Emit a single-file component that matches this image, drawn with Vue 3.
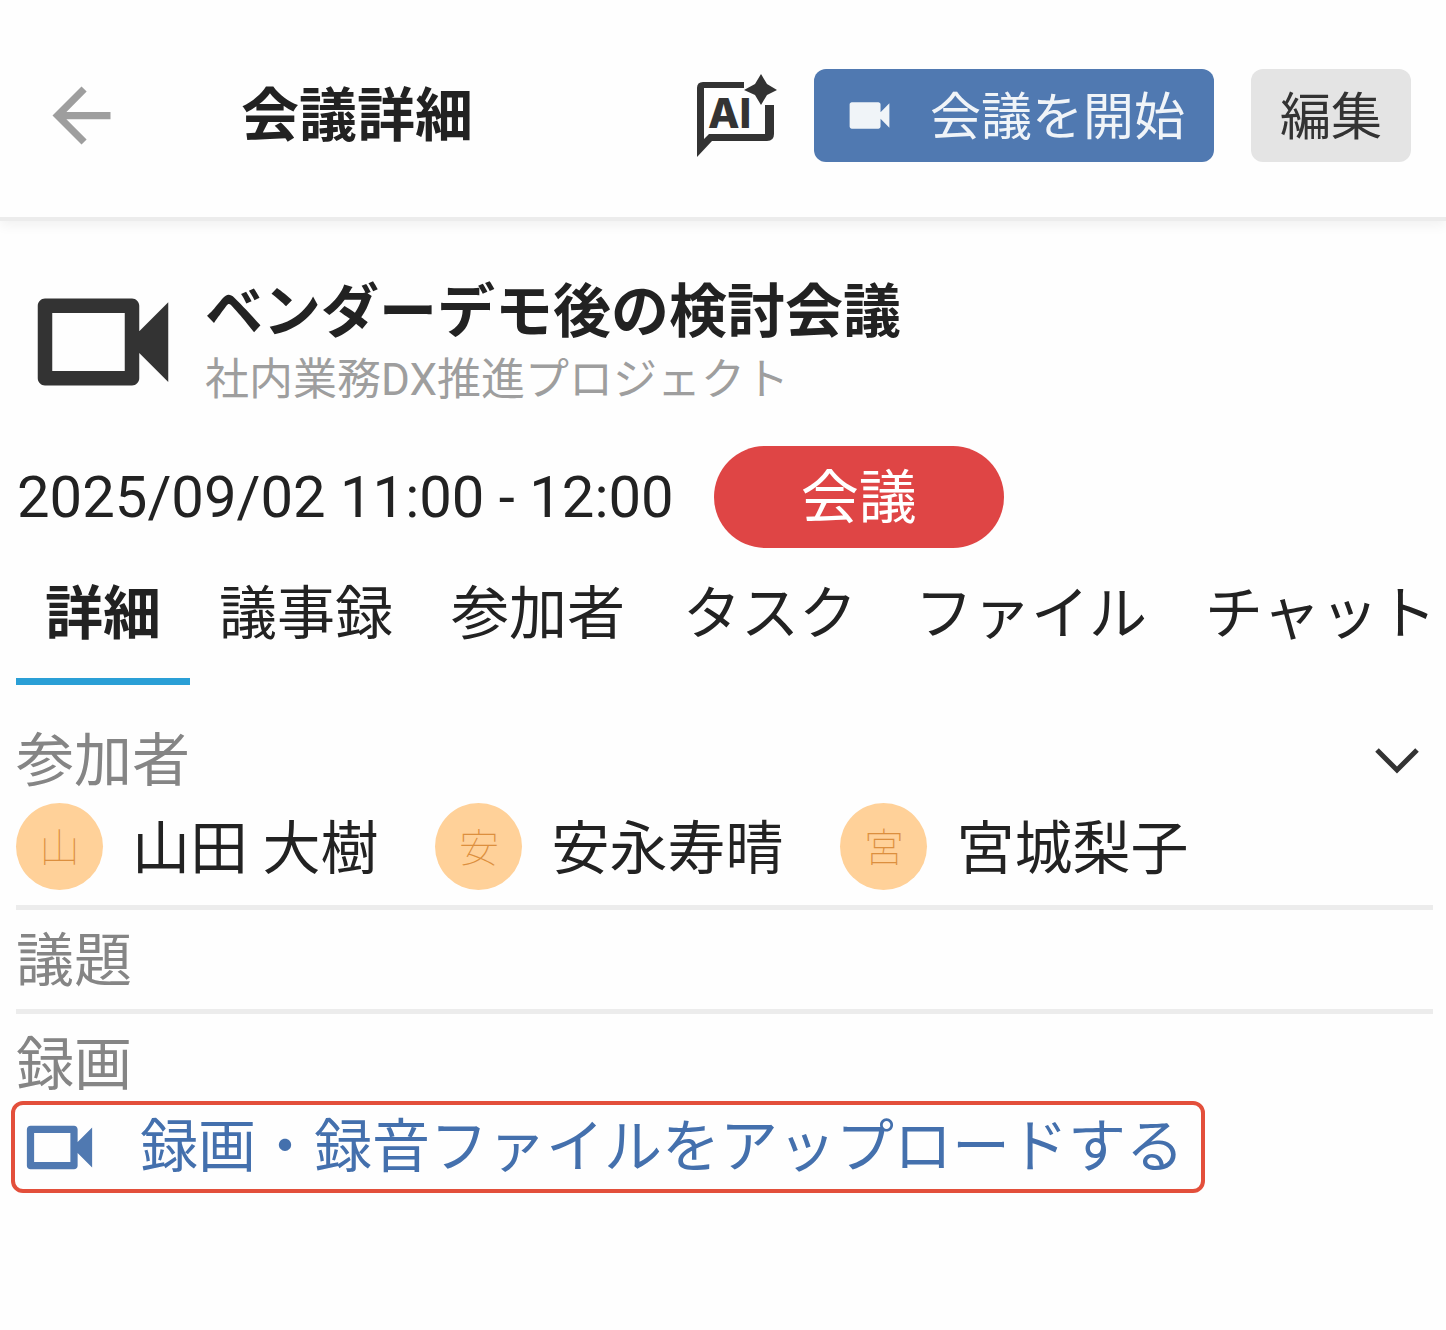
<template>
  <div class="page" lang="ja">
    <header class="header">
      <button type="button" class="back" aria-label="戻る">
        <svg viewBox="0 0 24 24"><path d="M20 11H7.83l5.59-5.59L12 4l-8 8 8 8 1.41-1.41L7.83 13H20v-2z" /></svg>
      </button>
      <h1>会議詳細</h1>
      <div class="actions">
        <button type="button" class="ai" aria-label="AI">
          <svg viewBox="0 0 82 84">
            <path d="M49 8H8Q2 8 2 14V83L17 67H72Q79 67 79 60V31H70V60H14L9 65V14H49Z" />
            <path d="M66 0L72 10L82 16L72 21L66 31L60 21L49 16L60 10Z" />
            <text x="13" y="54">AI</text>
          </svg>
        </button>
        <button type="button" class="btn btn-start">
          <svg viewBox="0 0 24 24"><path d="M17 10.5V7c0-.55-.45-1-1-1H4c-.55 0-1 .45-1 1v10c0 .55.45 1 1 1h12c.55 0 1-.45 1-1v-3.5l4 4v-11l-4 4z" /></svg>
          <span class="label">会議を開始</span>
        </button>
        <button type="button" class="btn btn-edit">
          <span class="label">編集</span>
        </button>
      </div>
    </header>

    <main>
      <div class="meeting">
        <svg class="meeting-icon" viewBox="0 0 24 24"><path :d="videoOutline" /></svg>
        <div>
          <h2>ベンダーデモ後の検討会議</h2>
          <p class="project">社内業務DX推進プロジェクト</p>
        </div>
      </div>

      <div class="schedule">
        <time datetime="2025-09-02T11:00">2025/09/02 11:00 - 12:00</time>
        <span class="badge">会議</span>
      </div>

      <nav class="tabs">
        <button
          v-for="tab in tabs"
          :key="tab"
          type="button"
          :class="{ active: activeTab === tab }"
          @click="activeTab = tab"
        >
          {{ tab }}
        </button>
      </nav>

      <section class="section">
        <div class="section-head">
          <h3>参加者</h3>
          <button type="button" class="toggle" aria-label="参加者の表示切替" @click="open = !open">
            <svg viewBox="0 0 48 30"><path d="M4 4l20 20L44 4" /></svg>
          </button>
        </div>
        <ul v-if="open" class="members">
          <li v-for="member in members" :key="member">
            <span class="avatar">{{ member[0] }}</span>
            <span class="label">{{ member }}</span>
          </li>
        </ul>
      </section>

      <section class="section">
        <h3>議題</h3>
      </section>

      <section class="section recording">
        <h3>録画</h3>
      </section>
      <button type="button" class="upload">
        <svg viewBox="0 0 24 24"><path :d="videoOutline" /></svg>
        <span>録画・録音ファイルをアップロードする</span>
      </button>
    </main>
  </div>
</template>

<script setup>
import { ref } from "vue";

const tabs = ["詳細", "議事録", "参加者", "タスク", "ファイル", "チャット"];
const activeTab = ref("詳細");

const members = ["山田 大樹", "安永寿晴", "宮城梨子"];
const open = ref(true);

const videoOutline =
  "M15 8v8H5V8h10m1-2H4c-.55 0-1 .45-1 1v10c0 .55.45 1 1 1h12c.55 0 1-.45 1-1v-3.5l4 4v-11l-4 4V7c0-.55-.45-1-1-1z";
</script>

<style>
body {
  background: #fefefe;
}
</style>

<style scoped>
.page {
  overflow: hidden;
  font-family: Roboto, "Noto Sans CJK JP", sans-serif;
  font-size: 58px;
  line-height: 76px;
  color: #222;
}

h1,
h2,
h3,
p,
ul {
  margin: 0;
  padding: 0;
  font-size: inherit;
}

button {
  padding: 0;
  border: none;
  background: none;
  font: inherit;
  color: inherit;
  white-space: nowrap;
  cursor: pointer;
}

svg {
  display: block;
  flex: none;
  fill: currentColor;
}

.label {
  padding-top: 4px;
}

.header {
  display: flex;
  align-items: center;
  padding: 69px 35px 55px 38px;
  border-bottom: 4px solid #ececec;
  box-shadow: 0 4px 12px rgba(0, 0, 0, 0.06);
}

.back {
  margin-right: 116px;
  color: #9e9e9e;
}

.back svg {
  width: 87px;
  height: 87px;
}

.actions {
  display: flex;
  align-items: center;
  gap: 37px;
  margin-left: auto;
}

.ai {
  color: #333;
}

.ai svg {
  width: 82px;
  height: 84px;
}

.ai text {
  font-family: Inter, sans-serif;
  font-size: 41px;
  font-weight: 800;
}

.btn {
  display: flex;
  align-items: center;
  height: 93px;
  padding: 0 29px;
  border-radius: 12px;
  font-size: 51px;
}

.btn-start {
  gap: 34px;
  background: #5079b1;
  color: #f0f4f8;
}

.btn-start svg {
  width: 53px;
  height: 53px;
}

.btn-edit {
  background: #e4e4e4;
  color: #333;
}

.meeting {
  display: flex;
  align-items: center;
  gap: 15px;
  padding: 53px 16px 0;
}

.meeting-icon {
  width: 174px;
  height: 174px;
  margin: -20px 0;
  color: #333;
}

.project {
  font-size: 44px;
  line-height: 60px;
  color: #9e9e9e;
}

.schedule {
  display: flex;
  align-items: center;
  gap: 40px;
  padding: 36px 17px 0;
}

.badge {
  padding: 14px 87px 12px;
  border-radius: 51px;
  background: #df4545;
  color: #fff;
}

.tabs {
  display: flex;
  padding-left: 16px;
}

.tabs button {
  flex: none;
  padding: 28px 29px 26px;
  border-bottom: 7px solid transparent;
}

.tabs .active {
  border-color: #2a9fd6;
  font-weight: 700;
}

.section {
  margin: 0 13px 0 16px;
  padding: 13px 0 10px;
  border-bottom: 5px solid #ececec;
}

.tabs + .section {
  margin-top: 25px;
  padding-bottom: 15px;
}

.section h3 {
  font-weight: 400;
  color: #858585;
}

.section-head {
  display: flex;
  align-items: center;
  justify-content: space-between;
}

.toggle {
  margin-right: 12px;
}

.toggle svg {
  width: 48px;
  height: 30px;
  fill: none;
  stroke: #333;
  stroke-width: 5px;
}

.members {
  display: flex;
  gap: 57px;
  margin-top: 4px;
  list-style: none;
}

.members li {
  display: flex;
  align-items: center;
  gap: 29px;
  white-space: nowrap;
}

.avatar {
  box-sizing: border-box;
  width: 87px;
  height: 87px;
  padding-top: 4px;
  border-radius: 50%;
  background: #ffd199;
  font-size: 40px;
  font-weight: 100;
  line-height: 83px;
  text-align: center;
  color: #dc8f3e;
}

.recording {
  padding-bottom: 0;
  border-bottom: none;
}

.upload {
  display: flex;
  align-items: center;
  gap: 37px;
  height: 92px;
  margin: -2px 0 0 11px;
  padding: 0 17px 0 1px;
  border: 4px solid #e34f3b;
  border-radius: 12px;
  color: #4470ad;
}

.upload svg {
  width: 87px;
  height: 87px;
  color: #5079b1;
}
</style>
